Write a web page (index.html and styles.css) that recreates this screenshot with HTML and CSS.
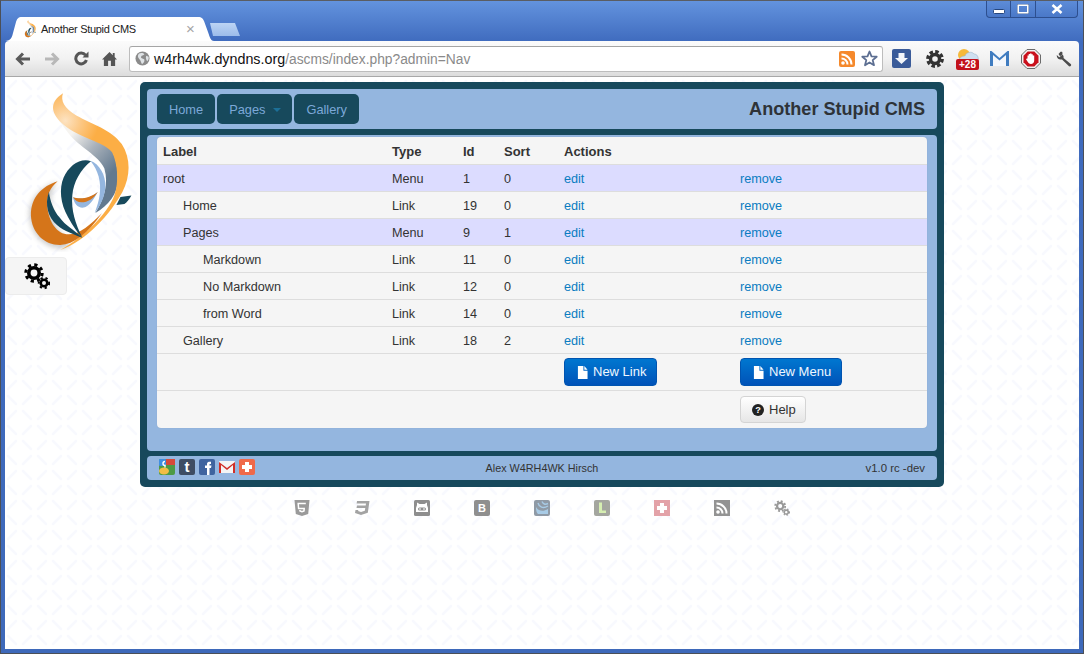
FILE: index.html
```html
<!DOCTYPE html>
<html lang="en">
<head>
<meta charset="utf-8">
<title>Another Stupid CMS</title>
<link rel="stylesheet" href="styles.css">
</head>
<body>
<svg class="defs" width="0" height="0" aria-hidden="true">
  <defs>
    <radialGradient id="tipGrad" gradientUnits="userSpaceOnUse" cx="195" cy="122" r="100">
      <stop offset="0" stop-color="#fde3c2"/><stop offset="0.5" stop-color="#fcc680"/><stop offset="1" stop-color="#fcae45"/>
    </radialGradient>
    <linearGradient id="bandGrad" gradientUnits="userSpaceOnUse" x1="215" y1="160" x2="340" y2="270">
      <stop offset="0" stop-color="#f6f4f0"/><stop offset="0.45" stop-color="#aab2bb"/><stop offset="1" stop-color="#62798f"/>
    </linearGradient>
    <filter id="logoBlur" x="-30%" y="-30%" width="160%" height="160%"><feGaussianBlur stdDeviation="8"/></filter>
    <symbol id="logo" viewBox="60 30 340 485">
      <path d="M170 305C115 325 80 365 88 415C96 475 145 510 195 504C225 495 190 470 170 440C150 410 140 350 170 305Z" fill="#666" opacity=".32" filter="url(#logoBlur)"/>
      <path d="M175 120C210 150 250 165 300 182C340 198 352 240 352 300C352 340 325 375 285 398C312 355 325 310 312 265C295 225 235 200 205 160Z" fill="url(#bandGrad)"/>
      <path d="M188 40C180 62 192 86 228 106C275 132 335 150 364 192C392 235 390 290 366 335C330 400 260 480 180 509C250 470 322 400 342 345C356 305 352 250 335 216C305 182 240 176 190 134C155 105 142 70 188 40Z" fill="url(#tipGrad)"/>
      <path d="M172 303C125 318 92 350 92 405C94 460 135 495 180 494C220 492 262 460 305 398C270 432 240 462 205 462C170 462 146 425 141 380C138 345 150 322 172 303Z" fill="#d5751a"/>
      <path d="M146 335C132 372 144 412 170 434C190 452 225 464 246 472C220 448 195 436 178 412C160 390 150 365 146 335Z" fill="#17495c"/>
      <path d="M272 243C240 232 206 256 190 292C176 325 180 370 203 410C218 438 232 458 246 472C225 430 212 390 216 345C220 305 240 268 272 243Z" fill="#17495c"/>
      <path d="M270 242C298 252 316 285 315 320C313 350 300 378 283 398C298 360 304 325 295 290C290 272 282 256 270 242Z" fill="#94b6df"/>
      <path d="M218 352C222 370 232 384 250 382C266 378 280 358 292 335C272 352 245 360 218 352Z" fill="#94b6df"/>
      <path d="M218 350C240 360 270 352 292 335C280 355 262 366 244 366C232 366 224 360 218 350Z" fill="#d5751a"/>
      <path d="M360 350L393 346C386 358 380 366 372 371L348 374Z" fill="#17495c"/>
    </symbol>
    <symbol id="gears" viewBox="0 0 26 28">
      <circle cx="10" cy="10" r="5.2" fill="none" stroke="currentColor" stroke-width="3.6"/>
      <circle cx="10" cy="10" r="8.2" fill="none" stroke="currentColor" stroke-width="3" stroke-dasharray="3.2 3.24"/>
      <circle cx="20" cy="20" r="3.3" fill="none" stroke="currentColor" stroke-width="2.6"/>
      <circle cx="20" cy="20" r="5.2" fill="none" stroke="currentColor" stroke-width="2" stroke-dasharray="2.2 2.88"/>
    </symbol>
    <symbol id="file" viewBox="0 0 12 14">
      <path d="M1 0H7V5H11.5V14H1Z M8 0L11.5 4H8Z" fill="#fff"/>
    </symbol>
  </defs>
</svg>
<div class="window">
  <header class="tabstrip">
    <div class="tab">
      <svg class="favicon" width="14" height="18"><use href="#logo"/></svg>
      <span class="tab-title">Another Stupid CMS</span>
      <span class="tab-close">×</span>
    </div>
    <div class="newtab"></div>
    <div class="wincontrols">
      <div class="winbtn winbtn-min"><svg width="12" height="6" viewBox="0 0 12 6"><rect x="0.5" y="0.5" width="11" height="4" rx="1" fill="#fff" stroke="#25467f"/></svg></div>
      <div class="winbtn winbtn-max"><svg width="12" height="10" viewBox="0 0 12 10"><rect x="1" y="1" width="10" height="8" fill="none" stroke="#fff" stroke-width="2"/><rect x="0" y="0" width="12" height="10" fill="none" stroke="#25467f" stroke-width=".8"/></svg></div>
      <div class="winbtn winbtn-close"><svg width="12" height="10" viewBox="0 0 12 10"><path d="M1.5 1L10.5 9M10.5 1L1.5 9" stroke="#fff" stroke-width="2.6"/></svg></div>
    </div>
  </header>
  <div class="toolbar">
    <svg class="navicon" width="16" height="14" viewBox="0 0 16 14"><path d="M15 7H2.5M8 1.5L2.5 7L8 12.5" fill="none" stroke="#5a5a5a" stroke-width="3"/></svg>
    <svg class="navicon" width="16" height="14" viewBox="0 0 16 14"><path d="M1 7H13.5M8 1.5L13.5 7L8 12.5" fill="none" stroke="#b8b8b8" stroke-width="3"/></svg>
    <svg class="navicon" width="16" height="15" viewBox="0 0 16 15"><path d="M12.5 4.2A5.4 5.4 0 1 0 13.4 9" fill="none" stroke="#555" stroke-width="3"/><path d="M9.5 6.5H15.5V0.5Z" fill="#555"/></svg>
    <svg class="navicon navicon-last" width="15" height="15" viewBox="0 0 16 16"><path d="M8 1L0 9H2V16H6.5V10.5H9.5V16H14V9H16L13.5 6.5V2H11.5V4.5Z" fill="#555"/></svg>
    <div class="omnibox">
      <svg class="globe" width="15" height="15" viewBox="0 0 16 16"><circle cx="8" cy="8" r="7.5" fill="#8b8b8b"/><path d="M4 3C6 1.5 9 2 10 3.5C9 5 7 4.5 6.5 6C6 8 8 7.5 10 9C10.5 11 9 13 7.5 14C6 12 6.5 10 4.5 8.5C3 7 2.5 5 4 3Z M12 5L14.5 6C15 8 14 10 13 11C12 9 11 7 12 5Z" fill="#dfe3e6"/></svg>
      <span class="url"><span class="url-host">w4rh4wk.dyndns.org</span>/ascms/index.php?admin=Nav</span>
      <svg class="rss" width="16" height="16" viewBox="0 0 16 16"><rect width="16" height="16" rx="2" fill="#f5892c"/><circle cx="4" cy="12" r="1.8" fill="#fff"/><path d="M2.5 7.5A6 6 0 0 1 8.5 13.5M2.5 3.5A10 10 0 0 1 12.5 13.5" fill="none" stroke="#fff" stroke-width="2"/></svg>
      <svg class="star" width="17" height="17" viewBox="0 0 17 17"><path d="M8.5 1.5L10.5 6.3L15.7 6.7L11.7 10.1L13 15.2L8.5 12.4L4 15.2L5.3 10.1L1.3 6.7L6.5 6.3Z" fill="#fff" stroke="#5d6f92" stroke-width="1.8" stroke-linejoin="round"/></svg>
    </div>
    <svg class="ext ext-download" width="19" height="19" viewBox="0 0 19 19"><rect width="19" height="19" rx="2" fill="#3a5b99"/><path d="M6.5 4H12.5V9H16L9.5 15L3 9H6.5Z" fill="#f3f6fa"/></svg>
    <svg class="ext ext-gear" width="18" height="18" viewBox="0 0 18 18"><circle cx="9" cy="9" r="4.5" fill="none" stroke="#333" stroke-width="3.4"/><circle cx="9" cy="9" r="7.3" fill="none" stroke="#333" stroke-width="3.2" stroke-dasharray="3.5 2.23"/></svg>
    <div class="weather">
      <svg width="23" height="14" viewBox="0 0 23 14"><circle cx="8" cy="8" r="6" fill="#f6b93b"/><path d="M3 14C3 10 7 9 9 9C10 5 16 4 18 7C21 7 23 10 22 14Z" fill="#cfe0f0" stroke="#9fb7cc" stroke-width=".6"/></svg>
      <span class="weather-badge">+28</span>
    </div>
    <svg class="ext ext-gmail" width="19" height="15" viewBox="0 0 19 15"><rect width="19" height="15" fill="#f4f7fb"/><path d="M0 15V0H1.5L9.5 7L17.5 0H19V15H16V4L9.5 9.5L3 4V15Z" fill="#3f7cc0"/></svg>
    <svg class="ext ext-stop" width="20" height="20" viewBox="0 0 20 20"><path d="M6 0.5H14L19.5 6V14L14 19.5H6L0.5 14V6Z" fill="#f2f2f2" stroke="#6b6b6b"/><path d="M6.7 2.5H13.3L17.5 6.7V13.3L13.3 17.5H6.7L2.5 13.3V6.7Z" fill="#c9101c"/><path d="M6.5 9.5V6.5H7.7V9V5H9V9V4.5H10.5V9V5.2H11.8V9.5V6.5H13.2V11.5C13.2 13.8 11.8 15 10 15C8.3 15 7.3 14 6.5 12.5L5 10.3L5.8 9.6Z" fill="#fff"/></svg>
    <svg class="ext ext-wrench" width="16" height="16" viewBox="0 0 16 16"><path d="M4.5 0.8L2.5 3L4 5.2L6.5 3.5L6.3 1C6 0.7 5 0.5 4.5 0.8Z M0.8 4L3.2 6.2L6.5 3.8C7.4 4.5 8 5.7 7.5 7L15 13.2C15.7 14.3 14.3 16 13 15.3L6 8.5C3.5 9 0.5 7.5 0.8 4Z" fill="#4c4c4c"/></svg>
  </div>
  <div class="content">
    <aside class="sidebar">
      <svg class="logo" width="114" height="162"><use href="#logo"/></svg>
      <div class="gearbox"><svg class="gearbox-icon" width="26" height="28"><use href="#gears"/></svg></div>
    </aside>
    <div class="center">
      <div class="panel">
        <nav class="navbar">
          <a class="navbtn">Home</a>
          <a class="navbtn navbtn-menu">Pages<span class="caret"></span></a>
          <a class="navbtn">Gallery</a>
          <h1 class="brand">Another Stupid CMS</h1>
        </nav>
        <main class="body">
          <table class="grid">
            <colgroup><col class="c1"><col class="c2"><col class="c3"><col class="c4"><col class="c5"><col class="c6"></colgroup>
            <thead><tr><th>Label</th><th>Type</th><th>Id</th><th>Sort</th><th colspan="2">Actions</th></tr></thead>
            <tbody>
              <tr class="menu"><td>root</td><td>Menu</td><td>1</td><td>0</td><td><a>edit</a></td><td><a>remove</a></td></tr>
              <tr><td class="l1">Home</td><td>Link</td><td>19</td><td>0</td><td><a>edit</a></td><td><a>remove</a></td></tr>
              <tr class="menu"><td class="l1">Pages</td><td>Menu</td><td>9</td><td>1</td><td><a>edit</a></td><td><a>remove</a></td></tr>
              <tr><td class="l2">Markdown</td><td>Link</td><td>11</td><td>0</td><td><a>edit</a></td><td><a>remove</a></td></tr>
              <tr><td class="l2">No Markdown</td><td>Link</td><td>12</td><td>0</td><td><a>edit</a></td><td><a>remove</a></td></tr>
              <tr><td class="l2">from Word</td><td>Link</td><td>14</td><td>0</td><td><a>edit</a></td><td><a>remove</a></td></tr>
              <tr><td class="l1">Gallery</td><td>Link</td><td>18</td><td>2</td><td><a>edit</a></td><td><a>remove</a></td></tr>
              <tr class="btnrow"><td colspan="4"></td>
                <td><a class="btn btn-primary"><svg width="11" height="13"><use href="#file"/></svg>New Link</a></td>
                <td><a class="btn btn-primary"><svg width="11" height="13"><use href="#file"/></svg>New Menu</a></td></tr>
              <tr class="btnrow helprow"><td colspan="5"></td>
                <td><a class="btn btn-help"><svg width="12" height="12" viewBox="0 0 13 13"><circle cx="6.5" cy="6.5" r="6.5" fill="#222"/><text x="6.5" y="10" class="qmark">?</text></svg>Help</a></td></tr>
            </tbody>
          </table>
        </main>
        <footer class="foot">
          <div class="social">
            <svg width="16" height="16" viewBox="0 0 16 16"><rect width="16" height="16" rx="2" fill="#4d9a45"/><rect x="7" width="9" height="6" fill="#d6493a"/><rect width="7" height="7" rx="1" fill="#3f8fe0"/><ellipse cx="5" cy="12" rx="5" ry="3.5" fill="#f3bd45"/><path d="M6 2.5A2 2 0 1 0 6 6.5V8.5" fill="none" stroke="#fff" stroke-width="1.4"/></svg>
            <svg width="16" height="16" viewBox="0 0 16 16"><rect width="16" height="16" rx="2" fill="#3e4d63"/><text x="8" y="13" class="soc soc-w">t</text></svg>
            <svg width="16" height="16" viewBox="0 0 16 16"><rect width="16" height="16" rx="2" fill="#3f649f"/><path d="M8 16V9H6V6.5H8V5C8 3 9.5 2.5 12 2.7V5H11C10.5 5 10.5 5.5 10.5 6V6.5H12.500L12 9H10.500V16Z" fill="#fff"/></svg>
            <svg width="16" height="16" viewBox="0 0 16 16"><rect y="2" width="16" height="12" rx="1" fill="#f4f4f4"/><path d="M0 14V3L8 9L16 3V14H14V6L8 11L2 6V14Z" fill="#d12e26"/></svg>
            <svg width="16" height="16" viewBox="0 0 16 16"><rect width="16" height="16" rx="2" fill="#f0694a"/><path d="M6 3H10V6H13V10H10V13H6V10H3V6H6Z" fill="#fff"/></svg>
          </div>
          <div class="author">Alex W4RH4WK Hirsch</div>
          <div class="version">v1.0 rc -dev</div>
        </footer>
      </div>
      <div class="badges">
        <svg width="16" height="16" viewBox="0 0 16 16"><path d="M0.5 0H15.5L14.2 14L8 16L1.8 14Z" fill="#9a9a9a"/><path d="M11.8 3.5H4.2L4.6 8.5H10.2L10 11L8 11.7L6 11L5.9 10" fill="none" stroke="#fff" stroke-width="1.5"/></svg>
        <svg width="16" height="16" viewBox="0 0 16 16"><path d="M3 1H15.5L13.8 12.8L7 15L1 13L1.5 10H4.3L4.1 11L7 12L10.8 10.8L11.3 8H2.5L3 5.6H11.7L12 3.5H2.6Z" fill="#a3a3a3"/></svg>
        <svg width="16" height="16" viewBox="0 0 16 16"><rect width="16" height="16" rx="1.5" fill="#8e8e8e"/><path d="M3 5V2.5L5.5 4H10.5L13 2.5V5L14 8V12H2V8Z" fill="#fff"/><rect x="4" y="7.5" width="8" height="3" rx="1.5" fill="#8e8e8e"/><rect x="5.5" y="8" width="1" height="2" fill="#fff"/><rect x="9.5" y="8" width="1" height="2" fill="#fff"/></svg>
        <svg width="16" height="16" viewBox="0 0 16 16"><rect width="16" height="16" rx="2" fill="#8f8f8f"/><text x="8" y="12" class="bdg">B</text></svg>
        <svg width="16" height="16" viewBox="0 0 16 16"><rect width="16" height="16" rx="2" fill="#8f9aa6"/><path d="M2 7C4 11 9 12 14 9V14H4C2.5 13 2 10 2 7Z" fill="#a8cbe6"/><path d="M4 3C5 7 9 9 14 6M8 1.5C9 4 11 5 14 3.5" fill="none" stroke="#a8cbe6" stroke-width="1.4"/></svg>
        <svg width="16" height="16" viewBox="0 0 16 16"><rect width="16" height="16" rx="2" fill="#a4a69f"/><path d="M5 2.5H8V10.5H12V13H5Z" fill="#d6efb2"/></svg>
        <svg width="16" height="16" viewBox="0 0 16 16"><rect width="16" height="16" fill="#e3a2a8"/><path d="M6 3H10V6H13V10H10V13H6V10H3V6H6Z" fill="#fff"/></svg>
        <svg width="16" height="16" viewBox="0 0 16 16"><rect width="16" height="16" fill="#939393"/><circle cx="4" cy="12" r="1.8" fill="#fff"/><path d="M2.5 7.5A6 6 0 0 1 8.5 13.5M2.5 3.5A10 10 0 0 1 12.5 13.5" fill="none" stroke="#fff" stroke-width="2"/></svg>
        <svg class="badge-gears" width="16" height="17"><use href="#gears"/></svg>
      </div>
    </div>
  </div>
</div>
</body>
</html>
```
FILE: styles.css
```css
* { box-sizing: border-box; }
html, body { margin: 0; padding: 0; height: 100%; overflow: hidden; }
body { font-family: "Liberation Sans", Arial, sans-serif; font-size: 13px; color: #333; }
.defs { display: block; }
a { text-decoration: none; }

.window {
  width: 1084px; height: 654px;
  display: flex; flex-direction: column;
  padding: 0 4px 4px 4px;
  border: 1px solid #4b4f57;
  border-top-color: #5a5d63;
  background: linear-gradient(#6393de 0, #3f6bbe 41px, #3e69ba 100%);
}

.tabstrip { height: 40px; flex: none; display: flex; align-items: flex-end; }
.tab {
  width: 209px; height: 24px; flex: none;
  display: flex; align-items: center;
  padding: 0 0 0 18px;
  background: #fff;
  clip-path: path("M0 24C6 24 7 20 8 16L11 5C12 2 13 0 17 0H193C197 0 198 2 199 4L203 15C205 21 206 24 209 24Z");
}
.favicon { flex: none; }
.tab-title { margin-left: 4px; font-size: 11px; letter-spacing: -0.3px; color: #222; white-space: nowrap; }
.tab-close { margin-left: 50px; font-size: 15px; line-height: 14px; color: #a5a5a5; }
.newtab {
  width: 30px; height: 13px; flex: none;
  margin: 0 0 5px -4px;
  background: linear-gradient(#bcd4f4, #9cbcea);
  clip-path: polygon(0 0, 25px 0, 30px 100%, 3px 100%);
}
.wincontrols {
  display: flex; align-self: flex-start; margin-left: auto; margin-right: 1px;
  height: 17px;
  border: 1px solid #2d4f8f; border-top: 0;
  border-radius: 0 0 4px 4px;
  background: linear-gradient(#5d8cd8, #4a78c8);
}
.winbtn { height: 16px; display: flex; align-items: center; justify-content: center; border-right: 1px solid #2d4f8f; }
.winbtn-min { width: 24px; padding-top: 5px; }
.winbtn-max { width: 25px; }
.winbtn-close { width: 41px; border-right: 0; }

.toolbar {
  height: 36px; flex: none;
  display: flex; align-items: center;
  padding: 0 6px 0 10px;
  background: linear-gradient(#fbfbfb 0, #f2f2f2 50%, #dcdcdc 100%);
  border-bottom: 1px solid #a8a8a8;
  border-radius: 4px 4px 0 0;
}
.navicon { flex: none; margin-right: 13px; }
.navicon-last { margin-right: 12px; }
.omnibox {
  width: 754px; height: 26px; flex: none;
  display: flex; align-items: center;
  padding: 0 4px 0 5px;
  background: #fff;
  border: 1px solid #bdbdbd; border-top-color: #a5a5a5;
  border-radius: 3px;
}
.globe { flex: none; }
.url { margin-left: 4px; font-size: 13.8px; color: #8a8a8a; white-space: nowrap; flex: 1; }
.url-host { font-size: 14.3px; color: #111; }
.rss { flex: none; }
.star { flex: none; margin-left: 6px; }
.ext { flex: none; }
.ext-download { margin-left: 9px; }
.ext-gear { margin-left: 15px; }
.weather { width: 23px; margin-left: 12px; display: flex; flex-direction: column; align-items: center; }
.weather svg { display: block; margin-bottom: -2px; }
.weather-badge {
  width: 23px; height: 11px;
  background: #c3121c; color: #fff; border-radius: 2px;
  font-size: 10px; font-weight: bold; line-height: 11px; text-align: center;
}
.ext-gmail { margin-left: 11px; }
.ext-stop { margin-left: 12px; }
.ext-wrench { margin-left: 15px; }

.content {
  flex: 1; min-height: 0;
  display: flex; align-items: flex-start;
  background-color: #fff;
  background-image: url("data:image/svg+xml,%3Csvg xmlns='http://www.w3.org/2000/svg' width='30' height='30'%3E%3Cg stroke='%23f8f9fe' stroke-width='2.6' stroke-linecap='round'%3E%3Cpath d='M3 12L11 4M18 4L26 12M3 19L11 27M18 27L26 19'/%3E%3C/g%3E%3C/svg%3E");
}
.sidebar { width: 135px; flex: none; display: flex; flex-direction: column; }
.logo { display: block; margin: 13px 0 0 15px; }
.gearbox {
  width: 62px; height: 38px; margin-top: 5px;
  display: flex; align-items: center; justify-content: center;
  background: #f5f5f5; border: 1px solid #ececec; border-radius: 4px;
  color: #000;
}
.gearbox-icon { margin: 1px 0 0 1px; }
.center { width: 804px; flex: none; display: flex; flex-direction: column; align-items: center; margin-top: 5px; }

.panel {
  width: 804px; height: 405px; padding: 7px;
  display: flex; flex-direction: column; gap: 6px;
  background: #17495c; border-radius: 5px;
}
.navbar {
  height: 40px; flex: none;
  display: flex; align-items: center; gap: 2px;
  padding: 0 12px 0 10px;
  background: #94b6df; border-radius: 4px;
}
.navbtn {
  height: 30px; display: flex; align-items: center;
  padding: 0 12px;
  background: #17495c; color: #7ca8d8; border-radius: 5px;
  font-size: 12.8px;
}
.navbtn-menu { padding-right: 11px; }
.caret {
  width: 0; height: 0; margin: 2px 0 0 8px;
  border-left: 4px solid transparent; border-right: 4px solid transparent;
  border-top: 4px solid #1c6f97;
}
.brand { margin: 0 0 0 auto; font-size: 18.1px; line-height: 20px; font-weight: bold; color: #2e3338; }
.body {
  height: 316px; flex: none;
  padding: 2px 10px 0 10px;
  background: #94b6df; border-radius: 4px;
}
.grid {
  width: 770px; table-layout: fixed;
  border-collapse: separate; border-spacing: 0;
  background: #f5f5f5; border-radius: 4px;
  box-shadow: 0 0 1px rgba(0,0,0,.15);
}
.c1 { width: 229px; } .c2 { width: 71px; } .c3 { width: 41px; } .c4 { width: 60px; } .c5 { width: 176px; } .c6 { width: 193px; }
.grid th, .grid td { padding: 1px 6px 0; text-align: left; vertical-align: middle; font-size: 12.65px; line-height: 18px; }
.grid th { height: 27px; font-size: 13px; font-weight: bold; padding-top: 2px; }
.grid td { height: 27px; border-top: 1px solid #dddddd; }
.grid td.l1 { padding-left: 26px; }
.grid td.l2 { padding-left: 46px; }
.grid a { color: #0a7cc1; }
.menu td { background: #dcdcff; }
.btnrow td { height: 37px; padding-top: 0; }
.helprow td { height: 38px; }
.grid .btn {
  display: inline-flex; align-items: center;
  border-radius: 4px; font-size: 13px; vertical-align: middle;
}
.grid .btn-primary {
  height: 28px; padding: 0 9.5px 0 12px; gap: 5px;
  background: linear-gradient(#0077d0, #0052b8);
  color: #f0f7ff; border: 1px solid #0054b0;
}
.grid .btn-help {
  height: 27px; padding: 0 9px 0 11px; gap: 5px;
  background: linear-gradient(#fff, #e6e6e6);
  color: #333; border: 1px solid #d4d4d4;
}
.qmark { font: bold 10px "Liberation Sans", Arial, sans-serif; fill: #fff; text-anchor: middle; }

.foot {
  height: 24px; flex: none; margin-top: -1px;
  display: grid; grid-template-columns: 1fr auto 1fr; align-items: center;
  padding: 0 12px 0 12px;
  background: #94b6df; border-radius: 4px;
  font-size: 10.8px; color: #333;
}
.social { display: flex; gap: 4px; margin-bottom: 2px; }
.social svg { display: block; }
.soc { font: bold 11px "Liberation Sans", Arial, sans-serif; fill: #fff; text-anchor: middle; }
.soc-w { font-size: 15px; }
.author { text-align: center; }
.version { text-align: right; font-size: 11.4px; }

.badges { display: flex; gap: 44px; margin-top: 13px; }
.badges svg { display: block; flex: none; }
.bdg { font: bold 11px "Liberation Sans", Arial, sans-serif; fill: #fff; text-anchor: middle; }
.badge-gears { color: #999; }
```
